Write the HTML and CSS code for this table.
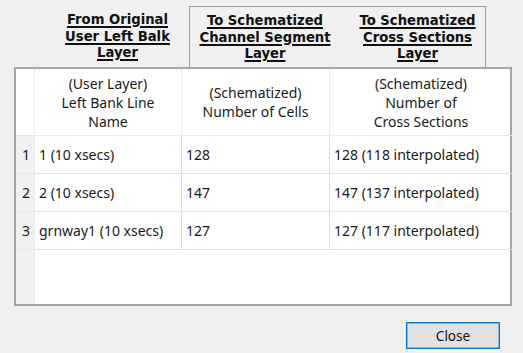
FILE: index.html
```html
<!DOCTYPE html>
<html>
<head>
<meta charset="utf-8">
<link rel="stylesheet" href="styles.css">
</head>
<body>
<div class="dialog">
  <div class="titles">
    <div class="title first">From Original<br>User Left Balk<br>Layer</div>
    <div class="tabs">
      <div class="title segment">To Schematized<br>Channel Segment<br>Layer</div>
      <div class="title xsec">To Schematized<br>Cross Sections<br>Layer</div>
    </div>
  </div>
  <div class="grid">
    <div class="rh head"></div>
    <div class="cell head">(User Layer)<br>Left Bank Line<br>Name</div>
    <div class="cell head">(Schematized)<br>Number of Cells</div>
    <div class="cell head last">(Schematized)<br>Number of<br>Cross Sections</div>

    <div class="rh">1</div>
    <div class="cell">1 (10 xsecs)</div>
    <div class="cell">128</div>
    <div class="cell last">128 (118 interpolated)</div>

    <div class="rh">2</div>
    <div class="cell">2 (10 xsecs)</div>
    <div class="cell">147</div>
    <div class="cell last">147 (137 interpolated)</div>

    <div class="rh">3</div>
    <div class="cell">grnway1 (10 xsecs)</div>
    <div class="cell">127</div>
    <div class="cell last">127 (117 interpolated)</div>

    <div class="rh filler"></div>
    <div class="filler-body"></div>
  </div>
  <div class="actions">
    <button class="btn">Close</button>
  </div>
</div>
</body>
</html>
```
FILE: styles.css
```css
html, body {
  margin: 0;
  padding: 0;
  background: #f0f0f0;
}

.dialog {
  width: 523px;
  height: 353px;
  font-family: "Noto Sans", "Open Sans", sans-serif;
  font-size: 14px;
  color: #1a1a1a;
  box-sizing: border-box;
  padding: 6px 11px 0 14px;
}

.titles {
  display: flex;
  height: 61px;
}

.title {
  font-family: "DejaVu Sans", sans-serif;
  font-weight: bold;
  font-size: 13.2px;
  line-height: 16.5px;
  text-decoration: underline;
  text-decoration-thickness: 1.5px;
  text-underline-offset: 2px;
  text-align: center;
  color: #111;
  padding-top: 6px;
  box-sizing: border-box;
  white-space: nowrap;
}

.title.first {
  width: 175px;
  padding-left: 32px;
}

.tabs {
  display: flex;
  width: 297px;
  border: 1px solid #a0a0a0;
  border-bottom: none;
  box-sizing: border-box;
}

.title.segment {
  width: 150px;
}

.title.xsec {
  flex: 1;
  padding-left: 10px;
}

.grid {
  display: grid;
  grid-template-columns: 19px 147px 148px 182px;
  grid-template-rows: 67px 38px 38px 38px 1fr;
  width: 498px;
  height: 239px;
  box-sizing: border-box;
  border: 2px solid #a2a6aa;
  background: #fff;
}

.rh {
  background: #f0f0f0;
  border-right: 1px solid #e6ecf6;
  border-bottom: 1px solid #e6e6e6;
  display: flex;
  align-items: center;
  justify-content: center;
  padding-left: 2px;
}

.rh.head {
  background: #fff;
}

.rh.filler {
  border-bottom: none;
}

.cell {
  border-right: 1px solid #dedede;
  border-bottom: 1px solid #e1e1e1;
  display: flex;
  align-items: center;
  padding-left: 4px;
  white-space: nowrap;
}

.cell.last {
  border-right: none;
}

.cell.head {
  justify-content: center;
  text-align: center;
  padding-left: 0;
  line-height: 19px;
  border-right-color: #e6ecf6;
  border-bottom-color: #e6ecf6;
}

.filler-body {
  grid-column: 2 / 5;
}

.actions {
  display: flex;
  justify-content: flex-end;
  padding-top: 16px;
  padding-right: 12px;
}

.btn {
  width: 94px;
  height: 27px;
  font-family: "Noto Sans", "Open Sans", sans-serif;
  font-size: 13.5px;
  color: #111;
  background: #e1e1e1;
  border: 1px solid #0078d7;
  box-shadow: inset 0 0 0 1px #7fb6e8;
  padding: 0;
}
```
